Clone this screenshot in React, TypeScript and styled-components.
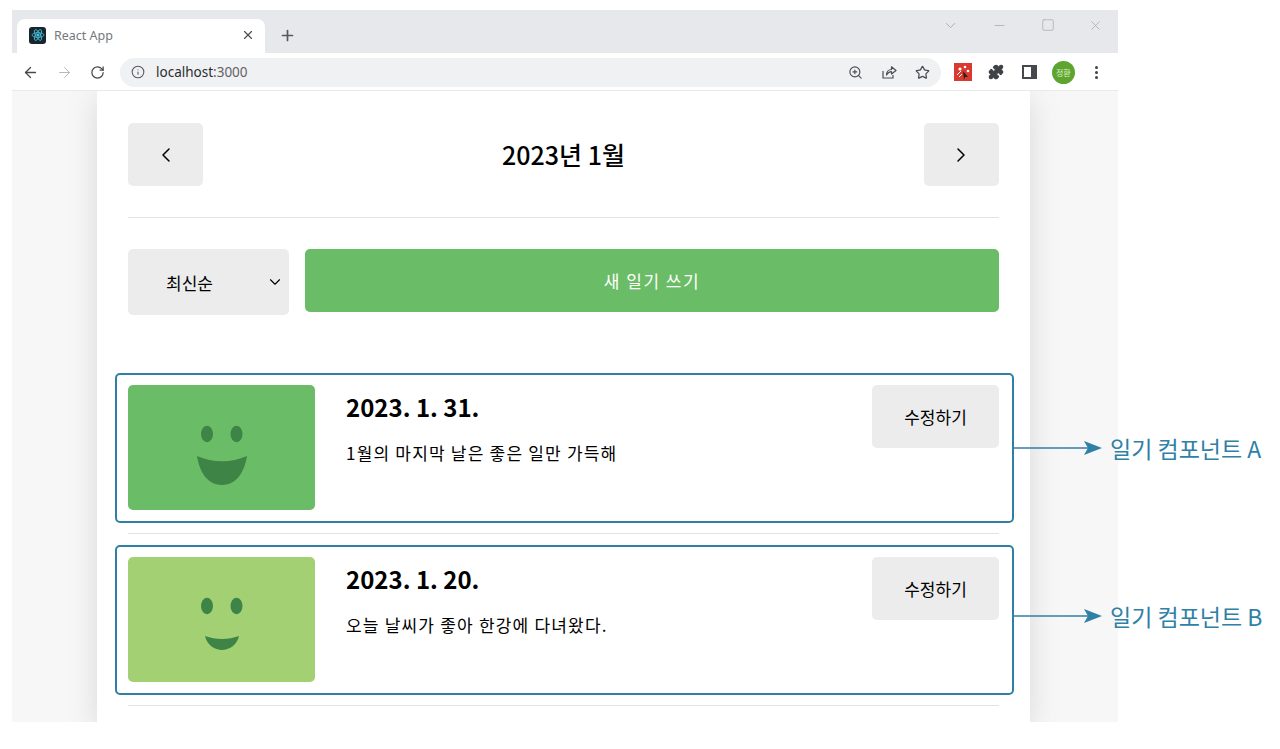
import styled, { createGlobalStyle } from "styled-components"
import { ArrowLeft, ArrowRight, RotateCw, Info, ZoomIn, Star, Puzzle, X, Plus, Minus, Square, ChevronDown, ChevronLeft, ChevronRight } from "lucide-react"

const Accent = "#2f7fa6"
const KoreanFont = `"Noto Sans CJK KR", "Noto Sans", sans-serif`

const diaries = [
  { id: 1, date: "2023. 1. 31.", content: "1월의 마지막 날은 좋은 일만 가득해", color: "#6abd66", mood: "big" },
  { id: 2, date: "2023. 1. 20.", content: "오늘 날씨가 좋아 한강에 다녀왔다.", color: "#a2d073", mood: "small" },
]

const Face = ({ mood }: { mood: string }) => (
  <svg width="187" height="125" viewBox="0 0 187 125" fill="#3d8446">
    <ellipse cx="79" cy="49" rx="6" ry="8.3" />
    <ellipse cx="108.5" cy="49" rx="6" ry="8.3" />
    {mood === "big" ? (
      <path d="M69 71 C85 78 103 78 119 71 C117 84 110 100 94 100 C78 100 71 84 69 71 Z" />
    ) : (
      <path d="M77 79 C88 83 100 83 111 79 C109 88 101 93 94 93 C87 93 79 88 77 79 Z" />
    )}
  </svg>
)

const Arrow = () => (
  <svg width="90" height="30" viewBox="0 0 90 30">
    <path d="M0 15 H80" stroke={Accent} strokeWidth="1.3" />
    <path d="M72 8 L90 15 L72 22 L76 15 Z" fill={Accent} />
  </svg>
)

const App = () => {
  return (
    <Stage>
      <GlobalStyle />
      <Browser>
        <TabStrip>
          <Tab>
            <Favicon>
              <svg width="16" height="16" viewBox="0 0 16 16" fill="none" stroke="#49c3e0" strokeWidth="0.8">
                <ellipse cx="8" cy="8" rx="6" ry="2.4" />
                <ellipse cx="8" cy="8" rx="6" ry="2.4" transform="rotate(60 8 8)" />
                <ellipse cx="8" cy="8" rx="6" ry="2.4" transform="rotate(120 8 8)" />
                <circle cx="8" cy="8" r="1.2" fill="#49c3e0" />
              </svg>
            </Favicon>
            <TabTitle>React App</TabTitle>
            <X size={14} strokeWidth={2} color="#4a4d52" />
          </Tab>
          <NewTab>
            <Plus size={17} strokeWidth={2.4} />
          </NewTab>
          <WindowControls>
            <ChevronDown size={17} strokeWidth={1.2} />
            <Minus size={15} strokeWidth={1.2} />
            <Square size={14} strokeWidth={1.2} />
            <X size={15} strokeWidth={1.2} />
          </WindowControls>
        </TabStrip>
        <Toolbar>
          <NavIcons>
            <ArrowLeft size={17} strokeWidth={1.8} color="#45484d" />
            <ArrowRight size={17} strokeWidth={1.4} color="#b4b7bb" />
            <RotateCw size={15} strokeWidth={2} color="#45484d" />
          </NavIcons>
          <Omnibox>
            <Info size={14} strokeWidth={1.8} color="#55585c" />
            <Url>
              localhost<UrlPort>:3000</UrlPort>
            </Url>
            <OmniActions>
              <ZoomIn size={15} strokeWidth={1.8} />
              <svg width="16" height="16" viewBox="0 0 16 16" fill="none" stroke="currentColor" strokeWidth="1.2">
                <path d="M2 7 V14 H12 V11" />
                <path d="M5.5 11 C5.5 7.5 8 5.5 10.5 5.5 V2.8 L15 6.5 L10.5 10 V7.6 C8.5 7.6 6.8 8.8 5.5 11 Z" strokeLinejoin="round" />
              </svg>
              <Star size={15} strokeWidth={2} />
            </OmniActions>
          </Omnibox>
          <Extensions>
            <svg width="18" height="18" viewBox="0 0 18 18">
              <rect width="18" height="18" fill="#d9392f" />
              <circle cx="6" cy="6" r="1.6" fill="#fff" />
              <circle cx="11" cy="4" r="1.3" fill="#fff" />
              <circle cx="14" cy="8" r="1.3" fill="#fff" />
              <path d="M9 8 L14 14 L11 14 L10 17 Z" fill="#222" />
              <path d="M3 12 L7 8 M5 14 L8 11" stroke="#fff" strokeWidth="1" />
            </svg>
            <Puzzle size={16} strokeWidth={2} color="#3f4246" fill="#3f4246" />
            <SidePanelIcon />
            <Avatar>정환</Avatar>
            <MoreDots>
              <i />
              <i />
              <i />
            </MoreDots>
          </Extensions>
        </Toolbar>
        <Viewport>
          <Paper>
            <Header>
              <NavButton>
                <ChevronLeft size={24} strokeWidth={1.5} />
              </NavButton>
              <HeaderTitle>2023년 1월</HeaderTitle>
              <NavButton>
                <ChevronRight size={24} strokeWidth={1.5} />
              </NavButton>
            </Header>
            <MenuRow>
              <SortSelect>
                최신순
                <ChevronDown size={18} strokeWidth={1.5} />
              </SortSelect>
              <NewButton>새 일기 쓰기</NewButton>
            </MenuRow>
            <DiaryList>
              {diaries.map((diary) => (
                <DiaryItem key={diary.id}>
                  <ImageSection $color={diary.color}>
                    <Face mood={diary.mood} />
                  </ImageSection>
                  <InfoSection>
                    <DiaryDate>{diary.date}</DiaryDate>
                    <DiaryContent>{diary.content}</DiaryContent>
                  </InfoSection>
                  <EditButton>수정하기</EditButton>
                </DiaryItem>
              ))}
            </DiaryList>
          </Paper>
        </Viewport>
      </Browser>
      <Highlight $top={373} />
      <Highlight $top={545} />
      <Callout $top={431}>
        <Arrow />
        <CalloutLabel>일기 컴포넌트 A</CalloutLabel>
      </Callout>
      <Callout $top={599}>
        <Arrow />
        <CalloutLabel>일기 컴포넌트 B</CalloutLabel>
      </Callout>
    </Stage>
  )
}

export default App

const GlobalStyle = createGlobalStyle`
  html, body {
    margin: 0;
    background: #fff;
  }
  body {
    font-family: ${KoreanFont};
    overflow: hidden;
  }
`

const Stage = styled.div`
  position: relative;
  width: 1280px;
  height: 749px;
  padding: 10px 162px 27px 12px;
  box-sizing: border-box;
  overflow: hidden;
`

const Browser = styled.div`
  width: 1106px;
  height: 712px;
  display: flex;
  flex-direction: column;
  overflow: hidden;
`

const TabStrip = styled.div`
  height: 43px;
  flex: none;
  background: #e6e8ec;
  display: flex;
  align-items: flex-end;
  padding-left: 5px;
`

const Tab = styled.div`
  width: 248px;
  height: 34px;
  background: #fff;
  border-radius: 8px 8px 0 0;
  box-sizing: border-box;
  padding: 0 10px 2px 12px;
  display: flex;
  align-items: center;
`

const Favicon = styled.div`
  width: 17px;
  height: 17px;
  border-radius: 3px;
  background: #16262c;
  display: flex;
  align-items: center;
  justify-content: center;
`

const TabTitle = styled.span`
  flex: 1;
  margin-left: 8px;
  font-family: "Noto Sans", sans-serif;
  font-size: 12.5px;
  color: #75787c;
`

const NewTab = styled.div`
  width: 17px;
  height: 34px;
  margin-left: 14px;
  padding-bottom: 2px;
  box-sizing: border-box;
  display: flex;
  align-items: center;
  color: #55585c;
`

const WindowControls = styled.div`
  margin-left: auto;
  align-self: flex-start;
  height: 30px;
  width: 176px;
  padding-right: 15px;
  box-sizing: border-box;
  display: flex;
  align-items: center;
  justify-content: space-between;
  color: #a4a7ab;
`

const Toolbar = styled.div`
  height: 38px;
  flex: none;
  background: #fff;
  border-bottom: 1px solid #e8eaec;
  box-sizing: border-box;
  padding-top: 1px;
  display: flex;
  align-items: center;
`

const NavIcons = styled.div`
  width: 108px;
  padding-left: 10px;
  box-sizing: border-box;
  display: flex;
  align-items: center;
  gap: 17px;
`

const Omnibox = styled.div`
  width: 821px;
  height: 29px;
  background: #eff1f3;
  border-radius: 15px;
  box-sizing: border-box;
  padding: 0 11px;
  display: flex;
  align-items: center;
  gap: 11px;
`

const Url = styled.span`
  flex: 1;
  font-family: "Noto Sans", sans-serif;
  font-size: 13.5px;
  color: #2b2c2f;
`

const UrlPort = styled.span`
  color: #5f6266;
`

const OmniActions = styled.div`
  display: flex;
  align-items: center;
  gap: 18px;
  color: #4a4d52;
`

const Extensions = styled.div`
  flex: 1;
  padding-left: 5px;
  display: grid;
  grid-template-columns: repeat(5, 33.5px);
  justify-items: center;
  align-items: center;
`

const SidePanelIcon = styled.div`
  width: 15px;
  height: 14px;
  box-sizing: border-box;
  border: 2px solid #45484d;
  border-right-width: 6px;
`

const Avatar = styled.div`
  width: 23px;
  height: 23px;
  border-radius: 50%;
  background: #5da52f;
  color: #dff0d2;
  font-size: 8px;
  display: flex;
  align-items: center;
  justify-content: center;
`

const MoreDots = styled.div`
  display: flex;
  flex-direction: column;
  gap: 2px;

  i {
    display: block;
    width: 3px;
    height: 3px;
    border-radius: 50%;
    background: #3f4246;
  }
`

const Viewport = styled.div`
  flex: 1;
  min-height: 0;
  background: #f7f7f7;
  padding-left: 85px;
  overflow: hidden;
`

const Paper = styled.div`
  width: 933px;
  min-height: 100%;
  background: #fff;
  box-shadow: rgba(100, 100, 111, 0.2) 0 7px 29px 0;
  padding: 0 31px;
  box-sizing: border-box;
`

const Header = styled.header`
  height: 127px;
  box-sizing: border-box;
  padding-top: 32px;
  border-bottom: 1px solid #e2e2e2;
  display: flex;
  align-items: flex-start;
  justify-content: space-between;
`

const HeaderTitle = styled.h1`
  margin: 13px 0 0;
  font-size: 25px;
  font-weight: 500;
  line-height: 36px;
  color: #000;
`

const GrayButton = styled.button`
  border: none;
  background: #ececec;
  border-radius: 5px;
  color: #000;
  font-family: ${KoreanFont};
  cursor: pointer;
  padding: 0;
`

const NavButton = styled(GrayButton)`
  width: 75px;
  height: 63px;
  display: flex;
  align-items: center;
  justify-content: center;
`

const MenuRow = styled.div`
  margin-top: 31px;
  display: flex;
  align-items: flex-start;
  gap: 16px;
`

const SortSelect = styled.div`
  width: 161px;
  height: 66px;
  flex: none;
  background: #ececec;
  border-radius: 5px;
  box-sizing: border-box;
  padding: 0 5px 0 38px;
  display: flex;
  align-items: center;
  justify-content: space-between;
  font-size: 17px;
  color: #000;
`

const NewButton = styled.button`
  flex: 1;
  height: 63px;
  border: none;
  border-radius: 5px;
  background: #6abd66;
  color: #fff;
  font-family: ${KoreanFont};
  font-size: 17px;
  letter-spacing: 1.5px;
  cursor: pointer;
`

const DiaryList = styled.div`
  margin-top: 47px;
`

const DiaryItem = styled.div`
  padding: 23px 0;
  border-bottom: 1px solid #e2e2e2;
  display: flex;
  align-items: flex-start;
`

const ImageSection = styled.div<{ $color: string }>`
  width: 187px;
  height: 125px;
  flex: none;
  background: ${(p) => p.$color};
  border-radius: 5px;
  display: flex;
`

const InfoSection = styled.div`
  flex: 1;
  margin-left: 31px;
`

const DiaryDate = styled.div`
  font-size: 24px;
  font-weight: 700;
  line-height: 36px;
  margin-top: 4px;
  color: #000;
`

const DiaryContent = styled.div`
  font-size: 17px;
  line-height: 26px;
  letter-spacing: 1.2px;
  margin-top: 15px;
  color: #000;
`

const EditButton = styled(GrayButton)`
  width: 127px;
  height: 63px;
  flex: none;
  font-size: 17px;
`

const Highlight = styled.div<{ $top: number }>`
  position: absolute;
  left: 115px;
  top: ${(p) => p.$top}px;
  width: 899px;
  height: 150px;
  box-sizing: border-box;
  border: 2px solid ${Accent};
  border-radius: 5px;
  pointer-events: none;
`

const Callout = styled.div<{ $top: number }>`
  position: absolute;
  left: 1012px;
  top: ${(p) => p.$top}px;
  display: flex;
  align-items: center;
  gap: 8px;
`

const CalloutLabel = styled.span`
  font-size: 23px;
  color: ${Accent};
  white-space: nowrap;
`
